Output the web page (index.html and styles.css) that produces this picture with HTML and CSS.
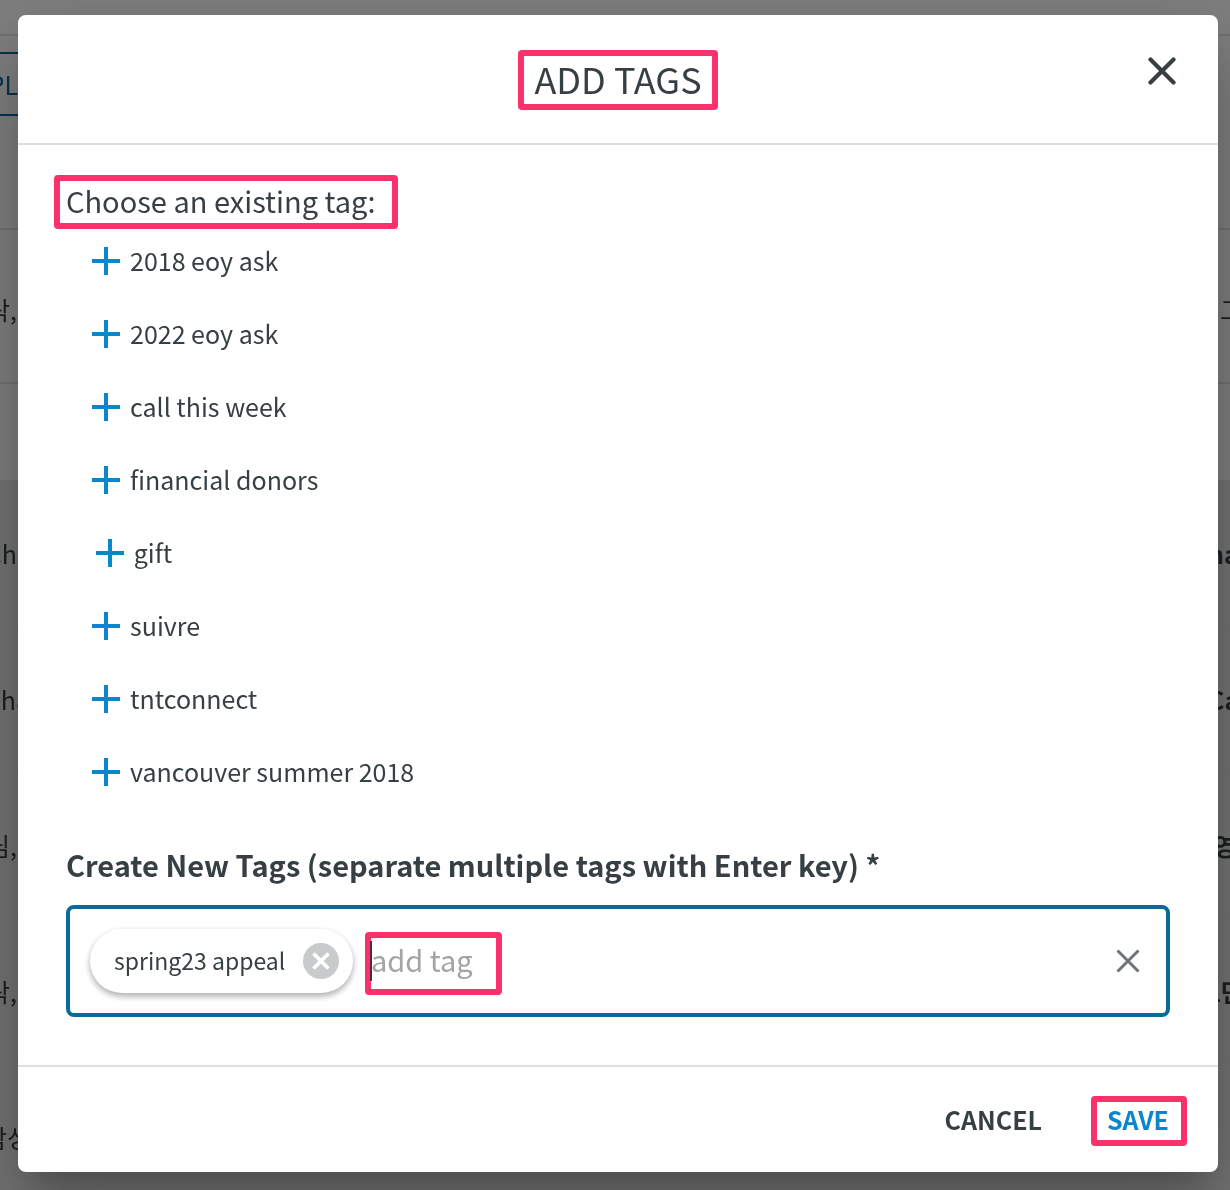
FILE: index.html
```html
<!DOCTYPE html>
<html lang="en">
<head>
<meta charset="utf-8">
<title>Add Tags</title>
<link rel="stylesheet" href="styles.css">
</head>
<body>
<div class="page" aria-hidden="true">
  <div class="row row-nav"></div>
  <div class="row row-tools"><span class="outlined">APPL</span></div>
  <div class="row row-summary"><span class="cell-start">락,</span><span class="cell-end">그</span></div>
  <div class="row row-gap"></div>
  <div class="row row-item"><span class="cell-start">Ch</span><b class="cell-end cell-latin">na</b></div>
  <div class="row row-item"><span class="cell-start cell-wide">ha</span><b class="cell-end cell-latin">Ca</b></div>
  <div class="row row-item"><span class="cell-start">님,</span><b class="cell-end cell-tight">영</b></div>
  <div class="row row-item"><span class="cell-start">락,</span><b class="cell-end cell-pair">로만</b></div>
  <div class="row row-item"><span class="cell-start cell-wide">삼성</span></div>
</div>

<div class="backdrop">
  <section class="dialog" role="dialog" aria-modal="true" aria-labelledby="dialog-title">
    <header class="dialog-header">
      <h1 class="title mark" id="dialog-title">ADD TAGS</h1>
      <button class="icon-button close" type="button" aria-label="Close">
        <svg width="28" height="28" viewBox="0 0 28 28"><path d="M2.5 2.5l23 23M25.500 2.500l-23 23" stroke="currentColor" stroke-width="4.200" stroke-linecap="round"/></svg>
      </button>
    </header>

    <form class="dialog-body" id="tags-form">
      <h2 class="subtitle mark">Choose an existing tag:</h2>
      <ul class="tags">
        <li><button class="tag" type="button"><svg class="plus" viewBox="0 0 28 28"><path d="M12 0h4v12h12v4H16v12h-4V16H0v-4h12z"/></svg><span class="tag-name">2018 eoy ask</span></button></li>
        <li><button class="tag" type="button"><svg class="plus" viewBox="0 0 28 28"><path d="M12 0h4v12h12v4H16v12h-4V16H0v-4h12z"/></svg><span class="tag-name">2022 eoy ask</span></button></li>
        <li><button class="tag" type="button"><svg class="plus" viewBox="0 0 28 28"><path d="M12 0h4v12h12v4H16v12h-4V16H0v-4h12z"/></svg><span class="tag-name">call this week</span></button></li>
        <li><button class="tag" type="button"><svg class="plus" viewBox="0 0 28 28"><path d="M12 0h4v12h12v4H16v12h-4V16H0v-4h12z"/></svg><span class="tag-name">financial donors</span></button></li>
        <li><button class="tag" type="button"><svg class="plus" viewBox="0 0 28 28"><path d="M12 0h4v12h12v4H16v12h-4V16H0v-4h12z"/></svg><span class="tag-name">gift</span></button></li>
        <li><button class="tag" type="button"><svg class="plus" viewBox="0 0 28 28"><path d="M12 0h4v12h12v4H16v12h-4V16H0v-4h12z"/></svg><span class="tag-name">suivre</span></button></li>
        <li><button class="tag" type="button"><svg class="plus" viewBox="0 0 28 28"><path d="M12 0h4v12h12v4H16v12h-4V16H0v-4h12z"/></svg><span class="tag-name">tntconnect</span></button></li>
        <li><button class="tag" type="button"><svg class="plus" viewBox="0 0 28 28"><path d="M12 0h4v12h12v4H16v12h-4V16H0v-4h12z"/></svg><span class="tag-name">vancouver summer 2018</span></button></li>
      </ul>

      <label class="field-label" for="new-tag">Create New Tags (separate multiple tags with Enter key) *</label>
      <div class="field">
        <span class="chip"><span class="chip-name">spring23 appeal</span>
          <button class="icon-button" type="button" aria-label="Remove spring23 appeal">
            <svg width="36" height="36" viewBox="0 0 36 36"><circle cx="18" cy="18" r="18" fill="#c9cacb"/><path d="M10.500 10.500l15 15M25.500 10.500l-15 15" stroke="#fff" stroke-width="3.800"/></svg>
          </button>
        </span>
        <span class="entry mark"><input class="entry-input" id="new-tag" type="text" placeholder="add tag"><span class="caret"></span></span>
        <button class="icon-button clear" type="button" aria-label="Clear">
          <svg width="24" height="24" viewBox="0 0 24 24"><path d="M1.500 1.500l21 21M22.500 1.500l-21 21" stroke="currentColor" stroke-width="3"/></svg>
        </button>
      </div>
    </form>

    <footer class="dialog-footer">
      <button class="action" type="button">CANCEL</button>
      <button class="action action-primary mark" type="submit" form="tags-form">SAVE</button>
    </footer>
  </section>
</div>
</body>
</html>
```

FILE: styles.css
```css
* { box-sizing: border-box; }

body {
  margin: 0;
  min-height: 100vh;
  overflow: hidden;
  background: #fff;
  color: #383f43;
  font-family: "Noto Sans CJK KR", "Open Sans", sans-serif;
  font-size: 25px;
}

button, input {
  margin: 0;
  padding: 0;
  border: 0;
  background: none;
  color: inherit;
  font: inherit;
}

svg { display: block; fill: none; }

/* Contact list behind the dialog */
.page {
  position: fixed;
  inset: 0;
  overflow: hidden;
}

.row {
  display: flex;
  justify-content: space-between;
  align-items: center;
  border-bottom: 2px solid #e4e4e4;
  line-height: 36px;
  white-space: nowrap;
}

.row-nav { height: 36px; }
.row-tools { height: 194px; padding-top: 16px; align-items: flex-start; }
.row-summary { height: 154px; padding-top: 6px; }
.row-gap { height: 96px; border: 0; }
.row-item { height: 146px; padding-top: 2px; background: #e8e8e8; border-color: #e5e5e5; }

.outlined {
  display: flex;
  justify-content: flex-end;
  align-items: center;
  width: 18px;
  height: 64px;
  border: solid #05699b;
  border-width: 2px 0;
  color: #05699b;
}

.cell-start { display: flex; justify-content: flex-end; width: 17px; }
.cell-wide { width: 30px; }
.cell-end { width: 10px; margin-left: auto; }
.cell-tight { width: 17px; }
.cell-latin { width: 22px; }
.cell-pair { width: 32px; }

/* Dialog */
.backdrop {
  position: relative;
  display: flex;
  min-height: 100vh;
  padding: 15px 12px 18px 18px;
  background: rgba(0, 0, 0, 0.5);
}

.dialog {
  display: flex;
  flex: 1;
  flex-direction: column;
  border-radius: 8px;
  background: #fff;
  box-shadow:
    0 22px 30px -14px rgba(0, 0, 0, 0.2),
    0 48px 76px 6px rgba(0, 0, 0, 0.14),
    0 18px 92px 16px rgba(0, 0, 0, 0.12);
}

.dialog-header {
  display: grid;
  grid-template-columns: 1fr auto 1fr;
  align-items: start;
  padding: 35px 42px 33px;
  border-bottom: 2px solid #dfdfdf;
}

.title {
  grid-column: 2;
  margin: 0;
  padding: 0 16px 4px;
  font-size: 36px;
  font-weight: 400;
  line-height: 56px;
}

.icon-button { display: block; cursor: pointer; }
.close { justify-self: end; margin-top: 7px; }

/* Highlight frame */
.mark { position: relative; }
.mark::after {
  content: "";
  position: absolute;
  inset: 0;
  border: 6px solid #fb316c;
  border-radius: 4px;
  pointer-events: none;
}

.dialog-body {
  flex: 1;
  padding: 30px 48px 48px;
}

.subtitle {
  width: fit-content;
  margin: 0 0 -5px -12px;
  padding: 0 22px 4px 12px;
  font-size: 29px;
  font-weight: 400;
  line-height: 50px;
}

.tags {
  margin: 0 0 36px;
  padding: 0 0 0 4px;
  list-style: none;
}

.tag {
  display: flex;
  justify-content: center;
  align-items: center;
  gap: 10px;
  min-width: 128px;
  height: 73px;
  padding: 0 22px;
}

.tag-name { padding-bottom: 2px; }

.plus { width: 28px; height: 28px; fill: #0a86cd; }

.field-label {
  display: block;
  margin-bottom: 21px;
  font-size: 29px;
  font-weight: 700;
  line-height: 40px;
}

.field {
  display: flex;
  align-items: center;
  padding: 20px 26px 20px 20px;
  border: 4px solid #0a6a99;
  border-radius: 8px;
}

.chip {
  display: flex;
  align-items: center;
  gap: 16px;
  height: 64px;
  margin-right: 12px;
  padding: 0 14px 0 24px;
  border-radius: 32px;
  box-shadow: 0 2px 6px rgba(0, 0, 0, 0.15), 0 4px 6px rgba(0, 0, 0, 0.2);
}

.chip-name { min-width: 173px; padding-bottom: 2px; font-size: 23px; }

.entry { display: flex; width: 137px; height: 64px; padding: 0 6px 4px; }
.entry::after { inset: 3px 0 -2px; }
.entry-input { width: 100%; font-size: 29px; outline: none; }
.entry-input::placeholder { color: #a2a4a5; opacity: 1; }
.caret {
  position: absolute;
  z-index: 1;
  top: 12px;
  left: 5px;
  width: 2px;
  height: 40px;
  background: #4a2c3a;
}
.clear { margin-left: auto; color: #6f7375; }

.dialog-footer {
  display: flex;
  justify-content: flex-end;
  align-items: center;
  gap: 33px;
  padding: 29px 31px 26px;
  border-top: 2px solid #dfdfdf;
}

.action {
  height: 50px;
  padding: 0 16px 4px;
  font-size: 25px;
  font-weight: 700;
}
.action-primary { padding-right: 18px; color: #0a86cd; }
```
